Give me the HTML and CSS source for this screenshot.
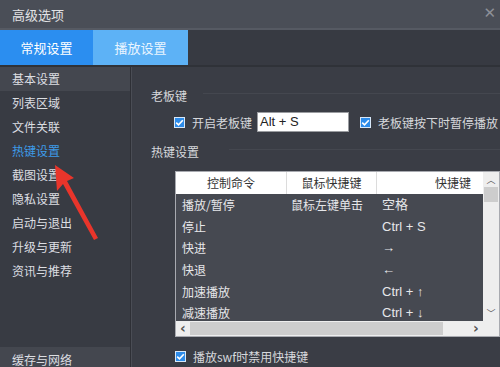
FILE: index.html
```html
<!DOCTYPE html>
<html lang="zh-CN">
<head>
    <meta charset="UTF-8">
    <title>高级选项</title>
    <link rel="stylesheet" href="styles.css">
</head>
<body>
    <div class="window">
        <div class="titlebar">
            <span class="title">高级选项</span>
            <span class="close">✕</span>
        </div>
        <div class="tabs">
            <div class="tab active">常规设置</div>
            <div class="tab second">播放设置</div>
        </div>
        <div class="main">
            <ul class="sidebar">
                <li class="selected">基本设置</li>
                <li>列表区域</li>
                <li>文件关联</li>
                <li class="current">热键设置</li>
                <li>截图设置</li>
                <li>隐私设置</li>
                <li>启动与退出</li>
                <li>升级与更新</li>
                <li>资讯与推荐</li>
                <li class="spacer"></li>
                <li class="bottom">缓存与网络</li>
            </ul>
            <div class="divider"></div>
            <div class="content">
                <div class="group-title"><span>老板键</span><i></i></div>
                <div class="boss-row">
                    <span class="check"><svg width="11" height="11" viewBox="0 0 11 11"><path d="M2.2 5.6 L4.5 7.8 L8.8 3.2" fill="none" stroke="#fff" stroke-width="1.6"/></svg></span>
                    <span class="label">开启老板键</span>
                    <span class="keybox">Alt + S</span>
                    <span class="check"><svg width="11" height="11" viewBox="0 0 11 11"><path d="M2.2 5.6 L4.5 7.8 L8.8 3.2" fill="none" stroke="#fff" stroke-width="1.6"/></svg></span>
                    <span class="label">老板键按下时暂停播放</span>
                </div>
                <div class="group-title hot"><span>热键设置</span><i></i></div>
                <div class="table">
                    <div class="grid">
                        <div class="head">
                            <div class="c1">控制命令</div>
                            <div class="c2">鼠标快捷键</div>
                            <div class="c3">快捷键</div>
                        </div>
                        <div class="body">
                            <div class="row"><div class="c1">播放/暂停</div><div class="c2">鼠标左键单击</div><div class="c3">空格</div></div>
                            <div class="row"><div class="c1">停止</div><div class="c2"></div><div class="c3">Ctrl + S</div></div>
                            <div class="row"><div class="c1">快进</div><div class="c2"></div><div class="c3">→</div></div>
                            <div class="row"><div class="c1">快退</div><div class="c2"></div><div class="c3">←</div></div>
                            <div class="row"><div class="c1">加速播放</div><div class="c2"></div><div class="c3">Ctrl + ↑</div></div>
                            <div class="row"><div class="c1">减速播放</div><div class="c2"></div><div class="c3">Ctrl + ↓</div></div>
                        </div>
                        <div class="hscroll">
                            <span class="arrow">‹</span>
                            <span class="thumb"></span>
                            <span class="arrow">›</span>
                        </div>
                    </div>
                    <div class="vscroll">
                        <span class="arrow up">︿</span>
                        <span class="thumb"></span>
                        <span class="track"></span>
                        <span class="arrow down">﹀</span>
                        <span class="corner"></span>
                    </div>
                </div>
                <div class="swf-row">
                    <span class="check"><svg width="11" height="11" viewBox="0 0 11 11"><path d="M2.2 5.6 L4.5 7.8 L8.8 3.2" fill="none" stroke="#fff" stroke-width="1.6"/></svg></span>
                    <span class="label">播放swf时禁用快捷键</span>
                </div>
            </div>
        </div>
        <svg class="red-arrow" width="500" height="367" viewBox="0 0 500 367">
            <polygon points="55,165 57,191 63,184 94,240 98,238 67,181 74,178" fill="#e9352b"/>
        </svg>
    </div>
</body>
</html>
```

FILE: styles.css
```css
body {
    margin: 0;
    background: #3a3d45;
    font-family: "Noto Sans CJK SC", "Noto Sans", sans-serif;
    font-size: 12px;
    color: #d6d8dc;
}
.window {
    position: relative;
    width: 500px;
    height: 367px;
    overflow: hidden;
    display: flex;
    flex-direction: column;
}
.titlebar {
    height: 28px;
    background: #4a4e57;
    border-bottom: 2px solid #565a63;
    display: flex;
    align-items: center;
    justify-content: space-between;
    padding: 0 4px 0 12px;
    flex-shrink: 0;
}
.title {
    font-size: 13px;
    color: #e2e3e6;
}
.close {
    font-family: "DejaVu Sans", sans-serif;
    font-size: 15px;
    color: #8d9098;
    margin-top: -2px;
}
.tabs {
    height: 35px;
    background: #373a42;
    border-bottom: 2px solid #2f3238;
    display: flex;
    flex-shrink: 0;
}
.tab {
    width: 93px;
    display: flex;
    align-items: center;
    justify-content: center;
    font-size: 13px;
    color: #ffffff;
}
.tab.active {
    background: #2b8ef0;
}
.tab.second {
    width: 95px;
    background: #5db2f6;
    color: #eaf5ff;
}
.main {
    flex: 1;
    display: flex;
    min-height: 0;
}
.sidebar {
    list-style: none;
    margin: 0;
    padding: 0;
    width: 131px;
    background: #383b43;
    display: flex;
    flex-direction: column;
}
.sidebar li {
    height: 24px;
    line-height: 24px;
    padding-left: 12px;
    color: #dcdee2;
}
.sidebar li.selected {
    background: #44474f;
}
.sidebar li.current {
    color: #3d9be9;
}
.sidebar li.spacer {
    flex: 1;
    height: auto;
}
.sidebar li.bottom {
    background: #44474f;
    height: 20px;
    line-height: 26px;
}
.divider {
    width: 1px;
    background: #4a4d55;
    border-left: 1px solid #2e3036;
}
.content {
    flex: 1;
    padding: 18px 0 0 19px;
    background: #3a3d45;
    display: flex;
    flex-direction: column;
}
.group-title {
    display: flex;
    align-items: center;
    height: 20px;
}
.group-title i {
    flex: 1;
    height: 1px;
    background: #44474f;
    margin-left: 16px;
    margin-top: -4px;
}
.group-title.hot {
    margin-top: 9px;
}
.group-title.hot i {
    margin-left: 30px;
}
.check {
    width: 11px;
    height: 11px;
    background: #2d8cea;
    border: 1px solid #d8e8f8;
    box-sizing: border-box;
    display: inline-flex;
}
.check svg {
    margin: -1px;
}
.boss-row {
    display: flex;
    align-items: center;
    height: 20px;
    margin: 7px 0 0 23px;
    white-space: nowrap;
}
.boss-row .label {
    margin-left: 7px;
}
.keybox {
    width: 92px;
    height: 20px;
    box-sizing: border-box;
    margin-left: 5px;
    margin-right: 11px;
    background: #ffffff;
    border: 1px solid #9a9ca0;
    color: #222;
    font-family: "Liberation Sans", Arial, sans-serif;
    font-size: 13px;
    line-height: 18px;
    padding-left: 2px;
}
.table {
    margin: 10px 0 0 24px;
    width: 325px;
    height: 166px;
    background: #f0f0f0;
    border: 1px solid #a8aab0;
    box-sizing: border-box;
    display: flex;
}
.grid {
    flex: 1;
    display: flex;
    flex-direction: column;
    min-width: 0;
}
.head {
    height: 22px;
    background: #ffffff;
    color: #333;
    display: flex;
    flex-shrink: 0;
}
.head > div {
    line-height: 22px;
    border-right: 1px solid #dcdcdc;
    box-sizing: border-box;
}
.head .c1 {
    text-align: center;
}
.head .c2 {
    text-align: center;
}
.head .c3 {
    text-align: right;
    padding-right: 12px;
    border-right: none;
}
.c1 {
    width: 111px;
}
.c2 {
    width: 90px;
}
.c3 {
    flex: 1;
}
.body {
    flex: 1;
    background: #464951;
    overflow: hidden;
    min-height: 0;
}
.row {
    display: flex;
    height: 21.7px;
    line-height: 21.7px;
    color: #e6e7ea;
}
.row .c1 {
    padding-left: 6px;
    box-sizing: border-box;
}
.row .c2 {
    padding-left: 4px;
    box-sizing: border-box;
}
.row .c3 {
    padding-left: 5px;
    font-family: "Liberation Sans", "Noto Sans CJK SC", sans-serif;
    font-size: 13px;
}
.hscroll {
    height: 15px;
    background: #eeeeee;
    display: flex;
    align-items: center;
    flex-shrink: 0;
}
.hscroll .arrow {
    width: 14px;
    text-align: center;
    color: #555;
    font-family: "DejaVu Sans", sans-serif;
    font-size: 14px;
    font-weight: bold;
    line-height: 15px;
}
.hscroll .thumb {
    width: 253px;
    height: 13px;
    background: #cdcdcd;
    margin-right: 26px;
}
.vscroll {
    width: 16px;
    background: #eeeeee;
    display: flex;
    flex-direction: column;
    align-items: center;
}
.vscroll .arrow {
    height: 15px;
    font-size: 9px;
    line-height: 15px;
    color: #555;
}
.vscroll .thumb {
    width: 14px;
    height: 15px;
    background: #cdcdcd;
}
.vscroll .track {
    flex: 1;
}
.vscroll .corner {
    height: 15px;
}
.swf-row {
    display: flex;
    align-items: center;
    margin: 11px 0 0 24px;
}
.swf-row .label {
    margin-left: 7px;
}
.red-arrow {
    position: absolute;
    left: 0;
    top: 0;
    pointer-events: none;
}
```
